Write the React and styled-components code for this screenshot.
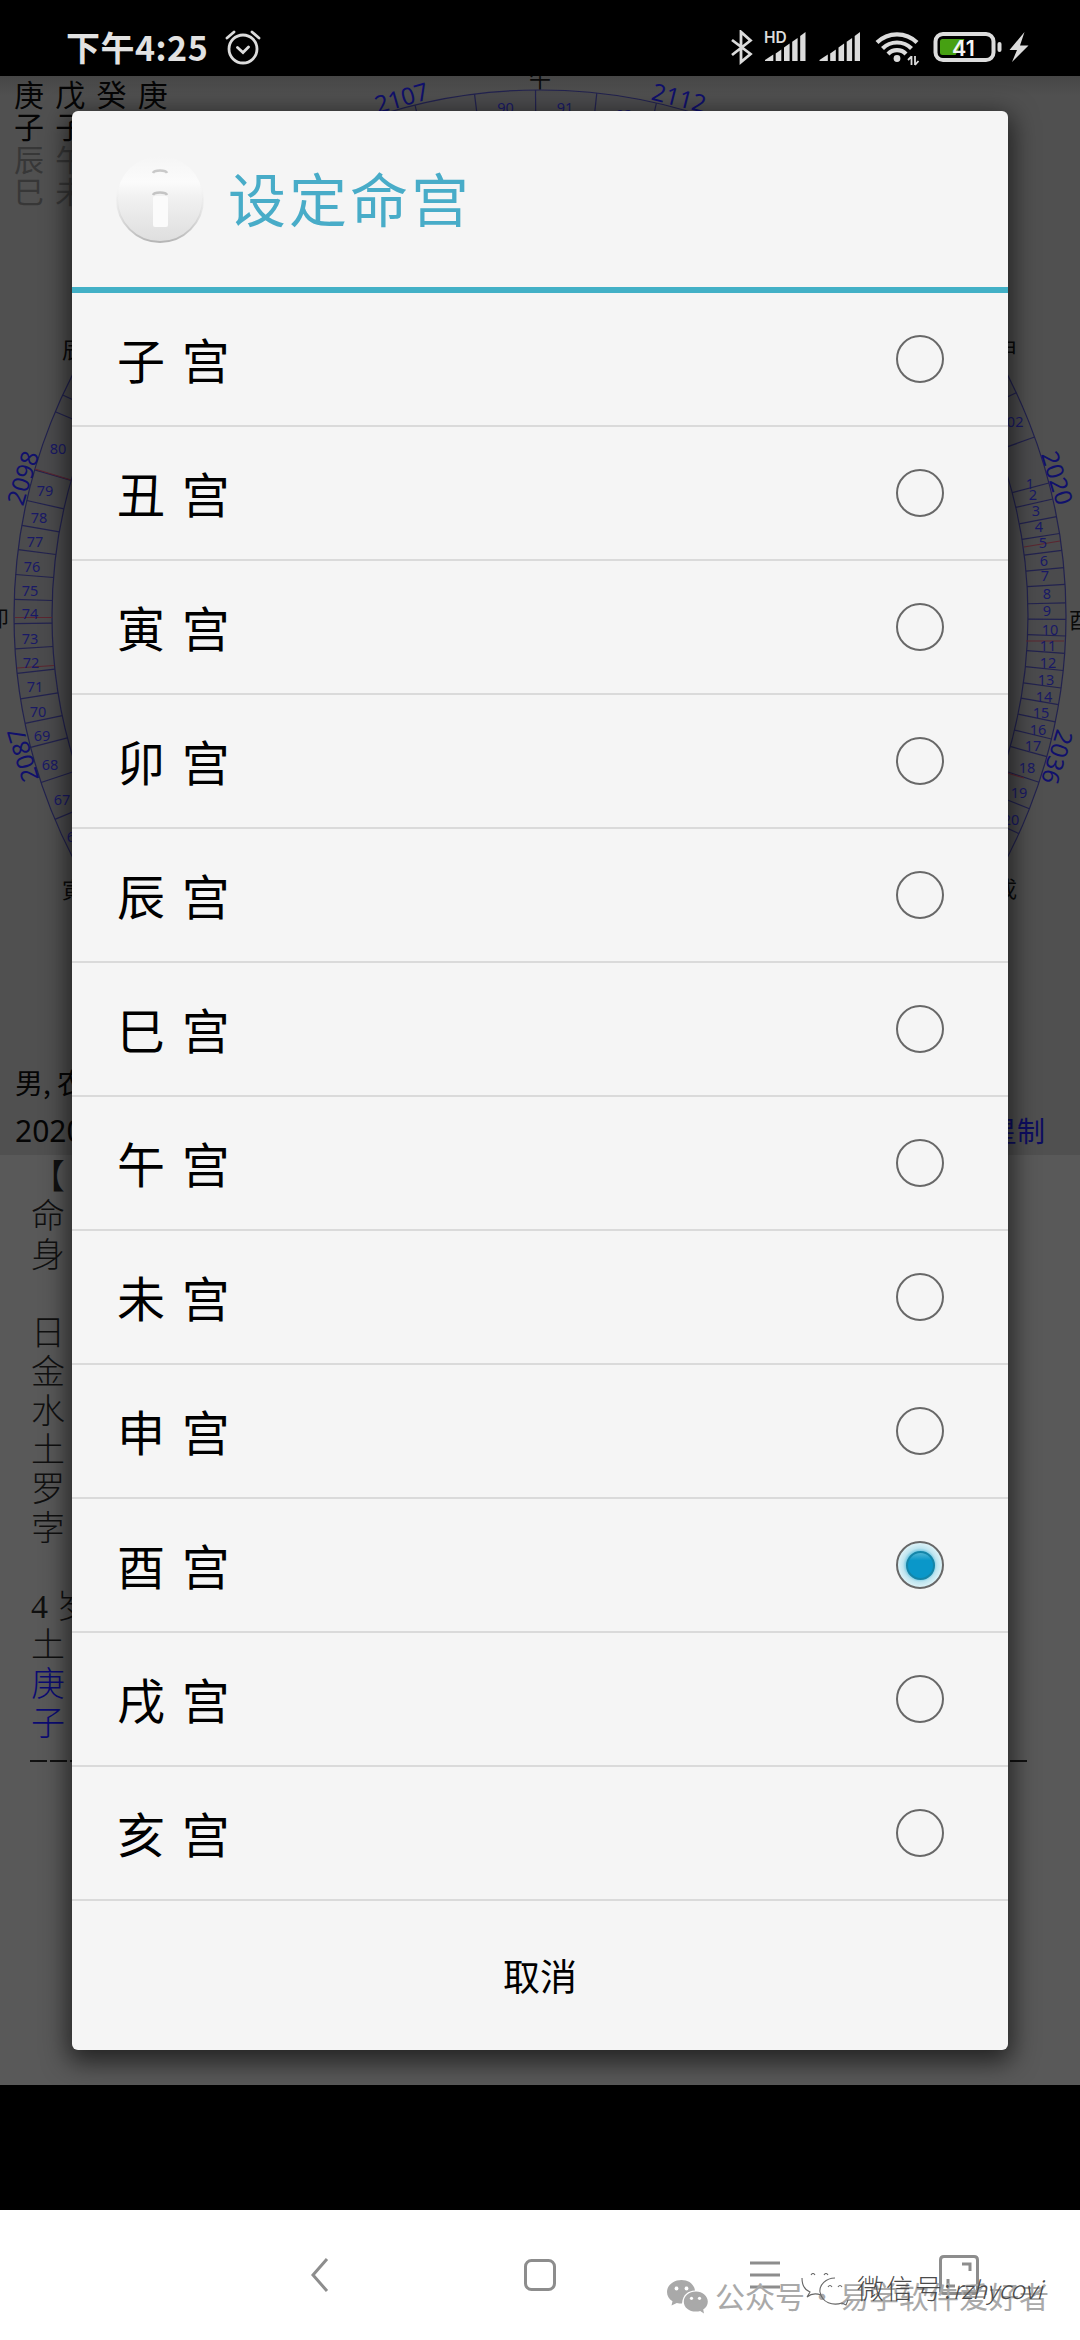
import React from 'react';
import styled, { createGlobalStyle } from 'styled-components';

const GlobalStyle = createGlobalStyle `
	* {
		box-sizing: border-box;
	}

	body {
		margin: 0;
		background: #000;
		font-family: "Noto Sans CJK SC", "Noto Sans", sans-serif;
	}
`

const Screen = styled.div `
	position: relative;
	display: flex;
	flex-direction: column;
	width: 1080px;
	height: 2340px;
	overflow: hidden;
	background: #000;
`

const StatusBar = styled.header `
	display: flex;
	justify-content: space-between;
	align-items: center;
	height: 76px;
	padding: 20px 50px 0 66px;
	background: #000;
	color: #e2e2e2;
`

const StatusGroup = styled.div `
	display: flex;
	align-items: center;
`

const Clock = styled.span `
	margin: -2px 17px 0 0;
	font-size: 34px;
	font-weight: 700;
	letter-spacing: 0.5px;
	line-height: 40px;
`

const AppArea = styled.main `
	position: relative;
	height: 2009px;
	overflow: hidden;
	background: #595959;
`

const ChartPane = styled.section `
	position: relative;
	height: 983px;
	padding: 1px 0 0 14px;
	background: linear-gradient(#464646, #505050 20px);
`

const ChartSvg = styled.svg `
	position: absolute;
	top: 0;
	left: 0;
	font-family: "Noto Sans", "Noto Sans CJK SC", sans-serif;
`

const Pillars = styled.div `
	color: ${props => props.$faded ? '#373737' : '#050505'};
	font-size: 30px;
	line-height: 32.3px;
	word-spacing: 4.5px;
	white-space: pre;
`

const InfoLine = styled.div `
	display: flex;
	justify-content: space-between;
	height: 48px;
	padding: 0 35px 0 15px;
	background: #505050;
	color: #050505;
	font-size: 28px;
	line-height: 47px;
`

const InfoDate = styled.span `
	font-family: "Noto Sans", sans-serif;
	font-size: 30px;
`

const InfoMode = styled.span `
	color: #0d0d62;
`

const Report = styled.section `
	padding: 3px 31px 0;
	color: #101010;
	font-family: "Liberation Serif", "Noto Sans CJK SC", serif;
	font-size: 34px;
	font-weight: 300;
`

const ReportLine = styled.div `
	height: 39px;
	color: ${props => props.$blue ? '#0b0b73' : 'inherit'};
	line-height: 39px;
	white-space: pre;
`

const Dashes = styled.div `
	width: 997px;
	height: 2px;
	margin: 17px 0 0 -1px;
	background: repeating-linear-gradient(90deg, #111 0 17px, transparent 17px 20px);
`

const Overlay = styled.div `
	position: absolute;
	inset: 0;
	display: flex;
	justify-content: center;
	align-items: flex-start;
	padding-top: 35px;
`

const Dialog = styled.div `
	display: flex;
	flex-direction: column;
	width: 936px;
	height: 1939px;
	border-radius: 6px;
	background: #f5f5f5;
	box-shadow: 0 8px 26px 4px rgba(0, 0, 0, 0.62);
`

const DialogTitle = styled.div `
	display: flex;
	align-items: center;
	height: 182px;
	padding-left: 44px;
	border-bottom: 6px solid #42b0c6;
`

const TitleText = styled.h1 `
	margin: -4px 0 0 24px;
	color: #48acc8;
	font-size: 58px;
	font-weight: 400;
	letter-spacing: 3px;
	line-height: 80px;
`

const Row = styled.label `
	display: flex;
	justify-content: space-between;
	align-items: center;
	height: 134px;
	padding: 0 64px 0 45px;
	border-bottom: 2px solid #dadada;
	color: #000;
	font-size: 48px;
	word-spacing: 6px;

	span {
		margin-top: -3px;
		line-height: 60px;
	}
`

const Radio = styled.div `
	display: flex;
	justify-content: center;
	align-items: center;
	width: 48px;
	height: 48px;
	border: 2px solid #686868;
	border-radius: 50%;
	background: ${props => props.$checked
		? 'radial-gradient(circle, #7ccbe3 0 14px, #bfe5f0 17px, #dcf2f7 22px)'
		: 'transparent'};
`

const RadioDot = styled.div `
	width: 29px;
	height: 29px;
	border: 2px solid #1585a8;
	border-radius: 50%;
	background: linear-gradient(#4db4d3, #0a97c9 30%, #0a97c9);
`

const CancelButton = styled.button `
	flex: 1;
	padding: 0 0 2px;
	border: 0;
	background: none;
	color: #000;
	font-family: inherit;
	font-size: 37px;
`

const NavBar = styled.nav `
	display: flex;
	align-items: flex-start;
	height: 130px;
	margin-top: 125px;
	padding: 45px 0 0 304px;
	background: #fff;
`

const NavIcon = styled.svg `
	flex: none;
	margin-right: ${props => props.$gap || 0}px;
	fill: none;
	stroke: #8d8d8d;
	stroke-width: 3;
`

const Watermark = styled.div `
	position: absolute;
	left: 667px;
	top: 2274px;
	display: flex;
	align-items: center;
	color: #a9a9a9;
	font-size: 30px;
	line-height: 42px;

	svg {
		margin: 4px 7px 0 0;
	}
`

const Dot = styled.span `
	width: 34px;
	text-align: center;
`

const SecondMark = styled.div `
	position: absolute;
	left: 801px;
	top: 2267px;
	display: flex;
	align-items: center;
	color: #4a4a4a;
	font-size: 27px;
	font-weight: 300;
	line-height: 42px;

	svg {
		margin: 4px 7px 0 0;
	}

	span {
		letter-spacing: 2px;
	}

	em {
		font-size: 25px;
		letter-spacing: -0.4px;
	}
`

const palaces = ['子', '丑', '寅', '卯', '辰', '巳', '午', '未', '申', '酉', '戌', '亥'];

const report = ['【', '命', '身', '', '日', '金', '水', '土', '罗', '孛', '', '4 岁', '土', '庚', '子'];

// wheel geometry, in screen coordinates
const CX = 540;
const CY = 616;
const R_OUT = 526;
const R_IN = 488;

const leftTicks = [395, 411.8, 469.8, 500.5, 525.3, 549.7, 574.5, 599.3, 623.7, 648.9, 673.3, 698.8, 723.3, 747.3, 782.5, 819.4];
const rightTicks = [392.7, 437, 483, 499, 516.7, 533.5, 550.4, 567.6, 584.4, 602.8, 619.3, 636, 653.3, 670.5, 688, 704.6, 721.8, 739, 756.6, 782.3, 808.7, 833.6];
const topTicks = [415, 474.5, 535.5, 596.8, 656.4];

const ages = [
	[80, 58, 449], [79, 45, 491], [78, 39, 518], [77, 35, 542], [76, 32, 567], [75, 30, 590.5],
	[74, 30, 614], [73, 30, 639], [72, 31, 663], [71, 35, 687], [70, 38, 712], [69, 42, 735.5],
	[68, 50, 765], [67, 62, 799.5], [66, 75, 837], [90, 505.5, 108], [91, 565, 108], [92, 624, 115],
	[102, 1011, 422], [1, 1030, 484], [2, 1033, 495], [3, 1036, 511], [4, 1039, 527], [5, 1043, 543],
	[6, 1044, 561], [7, 1045, 576], [8, 1047, 593.5], [9, 1047, 611], [10, 1050, 630], [11, 1048, 646],
	[12, 1048, 663], [13, 1046, 680], [14, 1044, 697], [15, 1041, 713], [16, 1038, 729.5], [17, 1033, 746],
	[18, 1027, 768], [19, 1019, 793], [20, 1011, 820],
];

const years = [
	[2107, 401.5, 98, -16], [2112, 679, 98, 14], [2098, 23, 478, -73], [2087, 23, 755, -107],
	[2020, 1057, 478, 73], [2036, 1057, 757, 107],
];

const branches = [
	['午', 540, 79], ['辰', 73, 350], ['申', 1006, 349], ['卯', -2, 618], ['酉', 1080, 620],
	['寅', 73, 890], ['戌', 1006, 889],
];

function radial (angle, key) {
	const c = Math.cos(angle);
	const s = Math.sin(angle);
	return <line key={key} x1={CX + R_IN * c} y1={CY + R_IN * s} x2={CX + R_OUT * c} y2={CY + R_OUT * s} />
}

function Wheel () {
	return (
		<ChartSvg width="1080" height="983" viewBox="0 76 1080 983">
			<g fill="none" stroke="#22224f" strokeWidth="1.2">
				<circle cx={CX} cy={CY} r={R_OUT} fill="rgba(20, 26, 48, 0.08)" />
				<circle cx={CX} cy={CY} r={R_IN} />
				{leftTicks.map(y => radial(Math.PI - Math.asin((y - CY) / R_OUT), `l${y}`))}
				{rightTicks.map(y => radial(Math.asin((y - CY) / R_OUT), `r${y}`))}
				{topTicks.map(x => radial(-Math.acos((x - CX) / R_OUT), `t${x}`))}
			</g>
			<g stroke="#5c2630" strokeWidth="1.2">
				<path d="M35 469L71 480M15 617.5H52M17 668L54 665.5M1024 547L1060 541M1026 641H1064M1007 773L1024 778" />
			</g>
			<g fill="#191966" fontSize="14.5" textAnchor="middle">
				{ages.map(([n, x, y]) => <text key={n} x={x} y={y + 5}>{n}</text>)}
			</g>
			<g fill="#10106c" fontSize="24" textAnchor="middle">
				{years.map(([n, x, y, a]) => (
					<text key={n} transform={`translate(${x} ${y}) rotate(${a})`} y="8.5">{n}</text>
				))}
			</g>
			<g fill="#0a0a0a" fontSize="22" textAnchor="middle">
				{branches.map(([n, x, y]) => <text key={n} x={x} y={y + 8}>{n}</text>)}
			</g>
		</ChartSvg>
	)
}

function AlarmIcon () {
	return (
		<svg width="36" height="36" viewBox="0 0 36 36" fill="none" stroke="#dcdcdc" strokeWidth="2.8" strokeLinecap="round">
			<circle cx="18" cy="19" r="14" />
			<path d="M12.5 17.5L18 22.5L23.5 17M2 8L9 2M34 8L27 2" />
		</svg>
	)
}

function SignalBars () {
	return (
		<>
			<path d="M0 29V28L8.3 22.5V29Z" />
			<path d="M10.7 29V21.5L16.3 17.5V29Z" />
			<path d="M19 29V15.5L24.6 11.5V29Z" />
			<path d="M27.2 29V9.7L32.6 6V29Z" />
			<path d="M35.2 29V4L40.5 0V29Z" />
		</>
	)
}

function StatusIcons () {
	return (
		<svg width="300" height="36" viewBox="729.5 31 300 36" fill="#dcdcdc">
			<path d="M731.5 41L750 55L740.5 63V33L750 41.5L731.5 56" fill="none" stroke="#dcdcdc" strokeWidth="2.8" />
			<text x="763.5" y="43.5" fontFamily="Inter, sans-serif" fontSize="15.5" fontWeight="600">HD</text>
			<g transform="translate(764.5 33)"><SignalBars /></g>
			<g transform="translate(819 33)"><SignalBars /></g>
			<g fill="none" stroke="#dcdcdc" strokeWidth="4.2">
				<path d="M876.5 43.5A28.5 28.5 0 0 1 916.5 43.5" />
				<path d="M882 49.5A20.5 20.5 0 0 1 911 49.5" />
				<path d="M887.5 55A12.5 12.5 0 0 1 905.5 55" />
			</g>
			<circle cx="896.5" cy="59.5" r="3.4" />
			<path d="M911 57V66M907.5 61L911 57.5M914.5 57V66M918 62L914.5 66" fill="none" stroke="#dcdcdc" strokeWidth="1.8" />
			<rect x="935" y="35" width="58" height="26" rx="7.5" fill="none" stroke="#dcdcdc" strokeWidth="4" />
			<path d="M942 40H964L955 56H942Q939.5 56 939.5 53.5V42.5Q939.5 40 942 40Z" fill="#46a012" />
			<rect x="997" y="43" width="4" height="10" rx="2" />
			<text x="951.5" y="56.5" fill="#f4f4f4" fontFamily="Inter, sans-serif" fontSize="21.5" fontWeight="600">41</text>
			<path d="M1024 33L1009 51H1016.5L1011.5 63L1028 46.5H1019.5Z" />
		</svg>
	)
}

function InfoIcon () {
	return (
		<svg width="88" height="92" viewBox="0 0 88 92">
			<defs>
				<linearGradient id="ball" x1="0" y1="0" x2="0" y2="1">
					<stop offset="0" stopColor="#f5f5f5" />
					<stop offset="0.3" stopColor="#fbfbfb" />
					<stop offset="0.5" stopColor="#f0f0f0" />
					<stop offset="1" stopColor="#dedede" />
				</linearGradient>
				<linearGradient id="rim" x1="0" y1="0" x2="0" y2="1">
					<stop offset="0.3" stopColor="#f5f5f5" stopOpacity="0" />
					<stop offset="1" stopColor="#b5b5b5" />
				</linearGradient>
			</defs>
			<circle cx="44" cy="46" r="43" fill="url(#ball)" stroke="url(#rim)" strokeWidth="2" />
			<path d="M37 20Q38 17.5 44 17.5T51 20" fill="none" stroke="#c9c9c9" strokeWidth="2.5" />
			<path d="M37 42Q38 39.5 44 39.5T51 42" fill="none" stroke="#c4c4c4" strokeWidth="2.5" />
			<rect x="37" y="43" width="15" height="31" rx="2" fill="#fbfbfb" />
		</svg>
	)
}

function WechatIcon () {
	return (
		<svg width="41" height="34" viewBox="0 0 41 34">
			<path d="M14.5 0C6.5 0 0 5.3 0 12C0 16 2 19 5.5 21.3L4.5 25.5L9.8 23C11.5 23.5 13 23.6 15 23.6C16 14 21 11 28 10.5C27 4 21.5 0 14.5 0Z" fill="#a9a9a9" />
			<path d="M29 11.5C22 11.5 16.8 16 16.8 21.7C16.8 27.4 22 31.6 29 31.6C30.5 31.6 32 31.4 33.2 31L37 33.5L36.2 29.5C39 27.7 40.8 25 40.8 21.7C40.8 16 35.5 11.5 29 11.5Z" fill="#a9a9a9" />
			<g fill="#fff">
				<circle cx="9.5" cy="8.5" r="1.9" />
				<circle cx="19.5" cy="8.5" r="1.9" />
				<circle cx="24.5" cy="18.3" r="1.6" />
				<circle cx="32.5" cy="18.3" r="1.6" />
			</g>
		</svg>
	)
}

function WechatOutline () {
	return (
		<svg width="49" height="34" viewBox="0 0 49 34" fill="none" stroke="#666" strokeWidth="1.1">
			<path d="M1 5C1 12 4 17 9 19L6 24Q12 19 20 22M10 2Q12 -1 14 2M23 2Q25 -1 27 2" />
			<path d="M34 5C25 5 18 12 19 19C21 30 32 33 41 30L45 32L47 27M27 14Q29 11 31 14M37 14Q39 11 41 14" />
		</svg>
	)
}

function App () {
	return (
		<Screen>
			<GlobalStyle />
			<StatusBar>
				<StatusGroup>
					<Clock>下午4:25</Clock>
					<AlarmIcon />
				</StatusGroup>
				<StatusIcons />
			</StatusBar>
			<AppArea>
				<ChartPane>
					<Pillars>庚 戊 癸 庚</Pillars>
					<Pillars>子 子</Pillars>
					<Pillars $faded>辰 午</Pillars>
					<Pillars $faded>巳 未</Pillars>
					<Wheel />
				</ChartPane>
				<InfoLine>男, 农</InfoLine>
				<InfoLine>
					<InfoDate>2020</InfoDate>
					<InfoMode>星制</InfoMode>
				</InfoLine>
				<Report>
					{report.map((text, i) => (
						<ReportLine key={i} $blue={i > 12}>{text}</ReportLine>
					))}
					<Dashes />
				</Report>
				<Overlay>
					<Dialog>
						<DialogTitle>
							<InfoIcon />
							<TitleText>设定命宫</TitleText>
						</DialogTitle>
						{palaces.map(name => (
							<Row key={name}>
								<span>{name} 宫</span>
								<Radio $checked={name === '酉'}>
									{name === '酉' && <RadioDot />}
								</Radio>
							</Row>
						))}
						<CancelButton>取消</CancelButton>
					</Dialog>
				</Overlay>
			</AppArea>
			<NavBar>
				<NavIcon width="30" height="40" $gap="186"><path d="M23 4L9 20L23 36" /></NavIcon>
				<NavIcon width="40" height="40" $gap="186"><rect x="5.5" y="5.5" width="29" height="29" rx="6" /></NavIcon>
				<NavIcon width="40" height="40" $gap="153"><path d="M4 8H34M4 20H34M4 32H34" /></NavIcon>
				<NavIcon width="40" height="42"><path d="M1.5 37V5Q1.5 1.5 5 1.5H35Q38.5 1.5 38.5 5V35Q38.5 38.5 35 38.5H5Q1.5 38.5 1.5 35M23 9H31V16M9 24V31H16" /></NavIcon>
			</NavBar>
			<Watermark>
				<WechatIcon />
				公众号<Dot>·</Dot>易学软件爱好者
			</Watermark>
			<SecondMark>
				<WechatOutline />
				<span>微信号:</span>
				<em>rzhycovi</em>
			</SecondMark>
		</Screen>
	)
}

export default App;
